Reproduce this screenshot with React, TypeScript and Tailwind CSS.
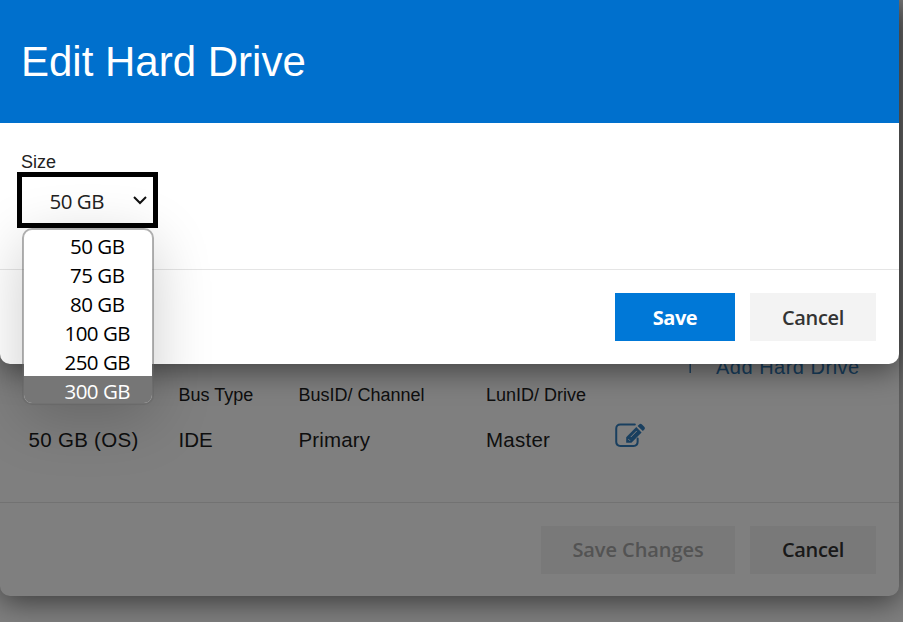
const sizes = ["50 GB", "75 GB", "80 GB", "100 GB", "250 GB", "300 GB"];

function EditIcon() {
  return (
    <svg width="31" height="27" viewBox="0 0 32 28" fill="none">
      <path d="M20.5 2.7H5.5Q1.2 2.7 1.2 7V20.5Q1.2 24.8 5.5 24.8H19.2Q23.4 24.8 23.4 20.5V17" stroke="#337fbf" strokeWidth="2.1" strokeLinecap="round" />
      <path d="M11.5 21.5V15.8L22 5.3L27.5 10.8L17 21.5Z" fill="#337fbf" />
      <path d="M23.3 4.1L25 2.5Q26.5 1.2 27.9 2.6L30.5 5.2Q31.6 6.5 30.4 7.8L28.8 9.4Z" fill="#337fbf" />
      <path d="M16.3 15.6L22.5 9.3M13.8 17.8L15.4 19.4" stroke="#fff" strokeWidth="1" />
    </svg>
  );
}

function HardDrivePanel() {
  return (
    <section className="flex h-[596px] w-[899px] flex-col rounded-b-[10px] bg-white text-[#1c1c1c] shadow-[0_6px_30px_rgba(0,0,0,0.55)]">
      <div className="flex h-[502px] flex-col pt-[352px]">
        <div className="flex h-[30px] items-center pl-[681px] text-[#337fbf]">
          <svg width="18" height="20" viewBox="0 0 18 20" stroke="#337fbf" strokeWidth="1.4"><path d="M0 6.3H18M9.2 0V16" /></svg>
          <span className="ml-[17px] whitespace-nowrap text-[20px] tracking-[0.5px]">Add Hard Drive</span>
        </div>
        <div className="grid h-[26px] grid-cols-[150px_120px_187.5px_1fr] items-center pl-[28.5px] text-[18px]">
          <span />
          <span>Bus Type</span>
          <span>BusID/ Channel</span>
          <span>LunID/ Drive</span>
        </div>
        <div className="grid h-[64px] grid-cols-[150px_120px_187.5px_128.5px_1fr] items-center pl-[28.5px] text-[20.5px]">
          <span className="tracking-[0.3px]">50 GB (OS)</span>
          <span>IDE</span>
          <span className="tracking-[0.15px]">Primary</span>
          <span className="tracking-[0.25px]">Master</span>
          <span className="pb-[9px]"><EditIcon /></span>
        </div>
      </div>
      <footer className="flex h-[94px] justify-end gap-[15px] border-t border-[#e5e5e5] pr-[23px] pt-[23px] font-['Open_Sans','Noto_Sans',sans-serif] text-[20px] font-semibold">
        <button className="h-12 w-[194px] whitespace-nowrap bg-[#f3f3f3] tracking-[-0.07px] text-[#a6a6a6]">Save Changes</button>
        <button className="h-12 w-[126px] bg-[#f3f3f3] tracking-[-0.3px] text-[#333]">Cancel</button>
      </footer>
    </section>
  );
}

function SizeSelect() {
  return (
    <div className="relative ml-[17px] h-14 w-[141px] border-[5px] border-black font-['Open_Sans','Noto_Sans',sans-serif] text-[20.5px]">
      <div className="flex h-full items-center justify-between pl-[27.5px] pr-[5px]">
        <span className="whitespace-nowrap pt-[3px] tracking-[-0.5px] text-[#222]">50 GB</span>
        <svg width="16" height="12" viewBox="0 0 16 12" fill="none" stroke="#111" strokeWidth="2"><path d="M2 3L8 9L14 3" /></svg>
      </div>
      <div className="absolute left-0 top-[51px] z-10 w-[132px] overflow-hidden rounded-[10px] border-2 border-[#646464]/50 bg-white bg-clip-padding text-black shadow-[0_14px_60px_rgba(0,0,0,0.2)]">
        <div className="flex h-[173px] flex-col pt-px">
          {sizes.map((size, i) => (
            <div
              key={size}
              className={
                i === sizes.length - 1
                  ? "flex h-[29px] shrink-0 items-center justify-center bg-[#767676] pl-[18.5px] pt-0.5 tracking-[-0.5px] text-white"
                  : "flex h-[29px] shrink-0 items-center justify-center pl-[18.5px] pt-0.5 tracking-[-0.5px]"
              }
            >
              {size}
            </div>
          ))}
        </div>
      </div>
    </div>
  );
}

function EditDialog() {
  return (
    <section className="absolute left-0 top-0 flex h-[364px] w-[899px] flex-col rounded-b-[10px] bg-white shadow-[0_6px_30px_rgba(0,0,0,0.5)]">
      <header className="flex h-[123px] shrink-0 items-center bg-[#0070cd] pl-[21px] text-[42px] text-white">
        <h1>Edit Hard Drive</h1>
      </header>
      <div className="h-[146px] shrink-0 pt-[29px]">
        <label className="block h-5 pl-[21px] text-[18px] leading-[21px] text-[#222]">Size</label>
        <SizeSelect />
      </div>
      <footer className="flex h-[95px] justify-end gap-[15px] border-t border-[#e5e5e5] pr-[23px] pt-[23px] font-['Open_Sans','Noto_Sans',sans-serif] text-[20px] font-semibold">
        <button className="h-12 w-[120px] bg-[#0078d7] pt-0.5 font-bold tracking-[-0.5px] text-white">Save</button>
        <button className="h-12 w-[126px] bg-[#f3f3f3] pt-0.5 tracking-[-0.3px] text-[#333]">Cancel</button>
      </footer>
    </section>
  );
}

export default function App() {
  return (
    <main className="relative h-[622px] w-[903px] overflow-hidden bg-white font-['Liberation_Sans',Arial,sans-serif]">
      <HardDrivePanel />
      <div className="absolute inset-0 bg-black/50" />
      <EditDialog />
    </main>
  );
}
